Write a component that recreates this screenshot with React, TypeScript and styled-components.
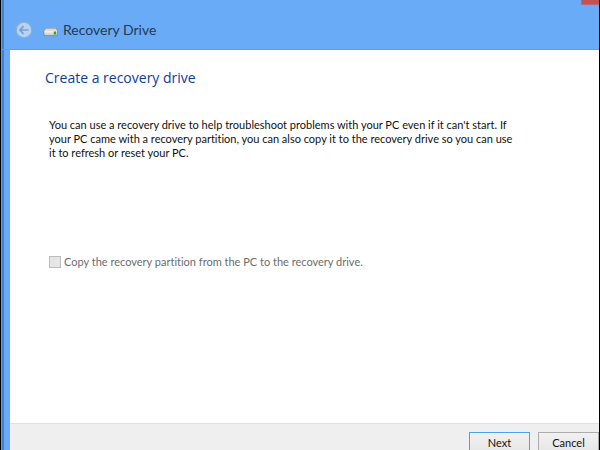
import React from "react";
import styled, { createGlobalStyle } from "styled-components";

const GlobalStyle = createGlobalStyle`
  * { box-sizing: border-box; }
  body {
    margin: 0;
    overflow: hidden;
    font-family: Lato, "Open Sans", sans-serif;
    font-variant-ligatures: none;
    font-size: 11px;
    line-height: 14px;
    color: #111;
  }
`;

const Window = styled.main`
  display: flex;
  flex-direction: column;
  height: 100vh;
  overflow: hidden;
  border: solid #000;
  border-width: 0 1px;
  background: linear-gradient(to right, #5d9fd4 0 1px, #3f83d8 1px 3px, #6aabf7 3px);
`;

const TitleBar = styled.header`
  display: flex;
  flex: none;
  justify-content: space-between;
  height: 50px;
  padding-left: 14px;
  border-bottom: 1px solid #639fe3;
`;

const TitleGroup = styled.div`
  display: flex;
  align-items: center;
  padding-top: 11px;
`;

const BackButton = styled.button`
  display: flex;
  padding: 0;
  margin-right: 10px;
  border: 0;
  background: none;
`;

const WindowTitle = styled.h1`
  margin: 0 0 0 4px;
  font-size: 14px;
  line-height: 20px;
  font-weight: 400;
  color: #263950;
`;

const CloseButton = styled.button`
  width: 18px;
  height: 5px;
  padding: 0;
  border: solid #b5687f;
  border-width: 0 0 1px 1px;
  background: #c75050;
`;

const Panel = styled.section`
  display: flex;
  flex: 1;
  flex-direction: column;
  min-height: 0;
  margin-left: 9px;
  background: #fff;
`;

const Content = styled.div`
  flex: 1;
  padding: 18px 35px 0;
`;

const Heading = styled.h2`
  margin: 0 0 30px;
  font-family: "Open Sans", "Noto Sans", sans-serif;
  font-size: 14px;
  line-height: 20px;
  font-weight: 400;
  color: #0f3c9c;
`;

const Description = styled.p`
  max-width: 468px;
  margin: 0 0 95px 4px;
`;

const Option = styled.label`
  display: flex;
  align-items: center;
  gap: 3px;
  margin-left: 4px;
  color: #6d6d6d;
`;

const Checkbox = styled.input`
  appearance: none;
  width: 12px;
  height: 12px;
  margin: 0;
  border: 1px solid #bcbcbc;
  background: #e6e6e6;
`;

const Footer = styled.footer`
  display: flex;
  flex: none;
  justify-content: flex-end;
  gap: 8px;
  height: 27px;
  padding-top: 8px;
  border-top: 1px solid #e0e0e0;
  background: #efefef;
`;

const ActionButton = styled.button<{ $primary?: boolean }>`
  width: 61px;
  height: 22px;
  padding: 0;
  border: 1px solid ${(p) => (p.$primary ? "#4f9fee" : "#acacac")};
  background: linear-gradient(#f1f1f1, #e6e6e6);
  font: inherit;
  color: #111;
`;

const BackIcon = () => (
  <svg width="18" height="18" viewBox="0 0 18 18" fill="none" aria-hidden="true">
    <circle cx="9" cy="9" r="7.8" fill="#b4d3f8" stroke="#91adcd" strokeWidth="1.3" />
    <path d="M13.5 9H5.2M8.6 5.2 4.9 9l3.7 3.8" stroke="#7e9fc4" strokeWidth="1.7" />
  </svg>
);

const DriveIcon = () => (
  <svg width="16" height="16" viewBox="0 0 16 16" aria-hidden="true">
    <defs>
      <linearGradient id="drive-front" x2="0" y2="1">
        <stop stopColor="#f6f6f4" />
        <stop offset="1" stopColor="#c9caca" />
      </linearGradient>
    </defs>
    <path d="M2.4 6h10.8L15 9v4l-1.3 1.2H1.7L.4 13V9Z" fill="#84868b" />
    <path d="M2.9 6.4h9.8l1.5 2.4H1.3Z" fill="#d6dadd" />
    <path d="M1.3 8.6h12.9v4l-.7.7H2l-.7-.7Z" fill="url(#drive-front)" />
    <path d="M10.8 9.6h2.4v2.8h-2.4Z" fill="#35a038" />
  </svg>
);

export default function App() {
  return (
    <>
      <GlobalStyle />
      <Window>
        <TitleBar>
          <TitleGroup>
            <BackButton type="button" aria-label="Back" disabled>
              <BackIcon />
            </BackButton>
            <DriveIcon />
            <WindowTitle>Recovery Drive</WindowTitle>
          </TitleGroup>
          <CloseButton type="button" aria-label="Close" />
        </TitleBar>
        <Panel>
          <Content>
            <Heading>Create a recovery drive</Heading>
            <Description>
              You can use a recovery drive to help troubleshoot problems with your PC even if it
              can't start. If your PC came with a recovery partition, you can also copy it to the
              recovery drive so you can use it to refresh or reset your PC.
            </Description>
            <Option>
              <Checkbox type="checkbox" disabled />
              Copy the recovery partition from the PC to the recovery drive.
            </Option>
          </Content>
          <Footer>
            <ActionButton type="button" $primary>Next</ActionButton>
            <ActionButton type="button">Cancel</ActionButton>
          </Footer>
        </Panel>
      </Window>
    </>
  );
}
